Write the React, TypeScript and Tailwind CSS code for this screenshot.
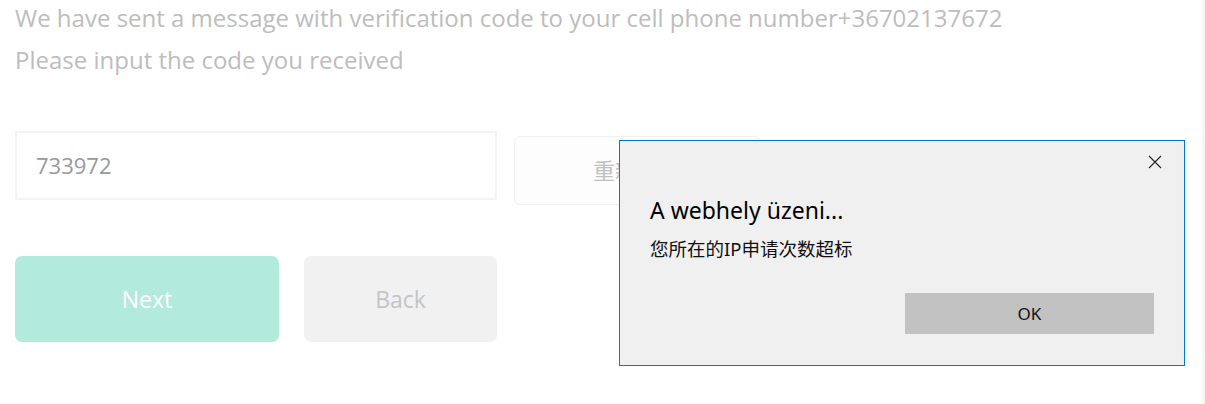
import React from 'react';

const pageFont = { fontFamily: '"Open Sans", "Noto Sans CJK SC", sans-serif' };

function AlertDialog() {
  return (
    <div
      className="absolute left-[619px] top-[140px] w-[566px] h-[226px] bg-[#f0f0f0] border border-[#0078d7] flex flex-col"
      style={{ fontFamily: '"Noto Sans", "Noto Sans CJK SC", sans-serif' }}
    >
      <div className="flex justify-end pt-[14px] pr-[22px]">
        <svg width="14" height="14" viewBox="0 0 14 14" className="text-[#222]">
          <path d="M1 1L13 13M13 1L1 13" stroke="currentColor" strokeWidth="1.1" />
        </svg>
      </div>
      <div className="pl-[30px] mt-[26px] text-[23px] leading-[30px] text-black">A webhely üzeni...</div>
      <div className="pl-[30px] mt-[12px] text-[18.5px] leading-[24px] text-[#111]">您所在的IP申请次数超标</div>
      <div className="flex justify-end pr-[30px] mt-[32px]">
        <button className="w-[249px] h-[41px] bg-[#c2c2c2] text-[17px] text-[#111]">OK</button>
      </div>
    </div>
  );
}

export default function App() {
  return (
    <div className="relative w-[1205px] h-[404px] bg-white flex overflow-hidden" style={pageFont}>
      <div className="flex-1 flex flex-col pl-[15px]">
        <div className="text-[24px] leading-[42px] text-[#bdbdbd] -mt-[3px]">
          <p>We have sent a message with verification code to your cell phone number+36702137672</p>
          <p>Please input the code you received</p>
        </div>

        <div className="flex items-start gap-[17px] mt-[50px]">
          <div className="w-[482px] h-[69px] border-2 border-[#f3f3f3] flex items-center pl-[19px] text-[22px] text-[#999]">
            733972
          </div>
          <button className="mt-[5px] w-[246px] h-[69px] rounded-[6px] border border-[#f0f0f0] bg-[#fdfdfd] text-[22px] text-[#c0c0c0]">
            重新发送
          </button>
        </div>

        <div className="flex gap-[25px] mt-[51px]">
          <button className="w-[264px] h-[86px] rounded-[7px] bg-[#b2ebdb] text-white text-[23px]">Next</button>
          <button className="w-[193px] h-[86px] rounded-[7px] bg-[#f1f1f1] text-[#c4c4c4] text-[23px]">Back</button>
        </div>
      </div>
      <div className="w-[3px] bg-[#f6f6f6]" />

      <AlertDialog />
    </div>
  );
}
